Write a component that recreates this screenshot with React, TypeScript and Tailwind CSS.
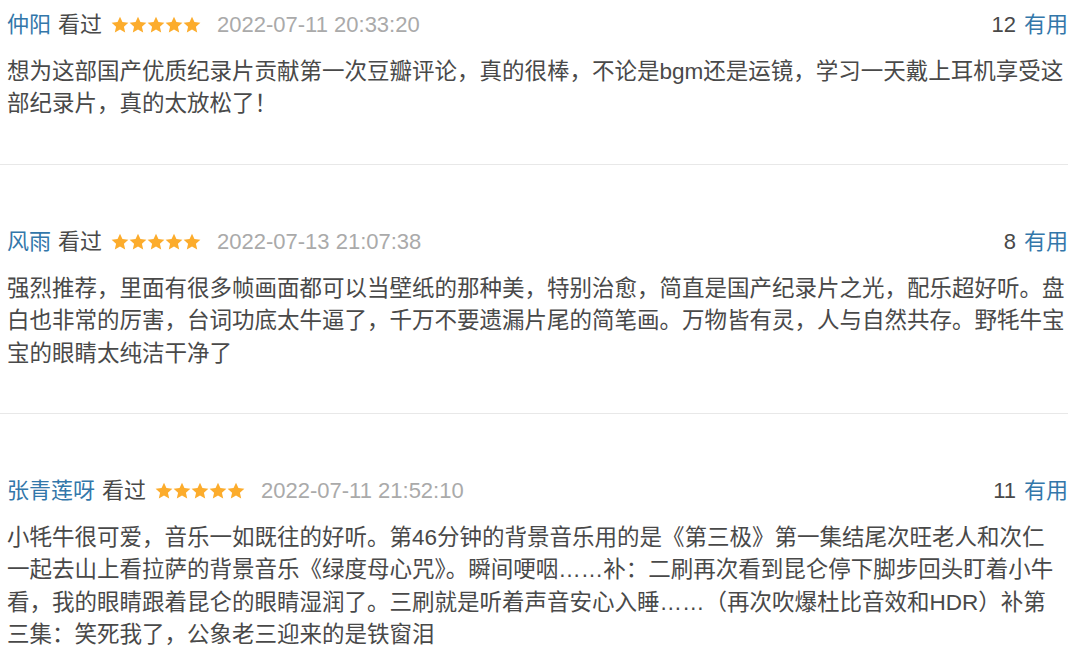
import React from "react"

interface Review {
  user: string
  time: string
  useful: number
  content: string
}

const reviews: Review[] = [
  {
    user: "仲阳",
    time: "2022-07-11 20:33:20",
    useful: 12,
    content:
      "想为这部国产优质纪录片贡献第一次豆瓣评论，真的很棒，不论是bgm还是运镜，学习一天戴上耳机享受这部纪录片，真的太放松了！",
  },
  {
    user: "风雨",
    time: "2022-07-13 21:07:38",
    useful: 8,
    content:
      "强烈推荐，里面有很多帧画面都可以当壁纸的那种美，特别治愈，简直是国产纪录片之光，配乐超好听。盘白也非常的厉害，台词功底太牛逼了，千万不要遗漏片尾的简笔画。万物皆有灵，人与自然共存。野牦牛宝宝的眼睛太纯洁干净了",
  },
  {
    user: "张青莲呀",
    time: "2022-07-11 21:52:10",
    useful: 11,
    content:
      "小牦牛很可爱，音乐一如既往的好听。第46分钟的背景音乐用的是《第三极》第一集结尾次旺老人和次仁一起去山上看拉萨的背景音乐《绿度母心咒》。瞬间哽咽……补：二刷再次看到昆仑停下脚步回头盯着小牛看，我的眼睛跟着昆仑的眼睛湿润了。三刷就是听着声音安心入睡……（再次吹爆杜比音效和HDR）补第三集：笑死我了，公象老三迎来的是铁窗泪",
  },
]

function Stars() {
  return (
    <span className="ml-[9px] mr-[16px] flex items-center">
      {[0, 1, 2, 3, 4].map((i) => (
        <svg key={i} width="18" height="18" viewBox="0 0 20 20">
          <path
            d="M10 0.7L12.7 6.78L19.32 7.47L14.37 11.92L15.76 18.43L10 15.1L4.24 18.43L5.63 11.92L0.68 7.47L7.3 6.78Z"
            fill="#fcac2c"
          />
        </svg>
      ))}
    </span>
  )
}

export default function App() {
  return (
    <div
      className="w-[1080px] bg-white"
      style={{ fontFamily: '"Liberation Sans", "Noto Sans CJK SC", sans-serif' }}
    >
      <div className="w-[1068px]">
        {reviews.map((r, idx) => (
          <div
            key={idx}
            className={`border-b border-[#e8e8e8] pb-[43px] pl-[7px] pr-[3px] ${
              idx === 0 ? "pt-[9px]" : "pt-[61px]"
            } last:border-b-0 last:pb-0`}
          >
            <div className="flex h-[32px] items-center text-[22px] leading-[32px]">
              <span className="text-[#3377aa]">{r.user}</span>
              <span className="ml-[7px] text-[#494949]">看过</span>
              <Stars />
              <span className="text-[#aaaaaa]">{r.time}</span>
              <span className="-mr-[3px] ml-auto flex">
                <span className="text-[#494949]">{r.useful}</span>
                <span className="ml-[8px] text-[#3377aa]">有用</span>
              </span>
            </div>
            <p className="mt-[15px] text-[22.5px] leading-[32.4px] text-[#494949]">{r.content}</p>
          </div>
        ))}
      </div>
    </div>
  )
}
